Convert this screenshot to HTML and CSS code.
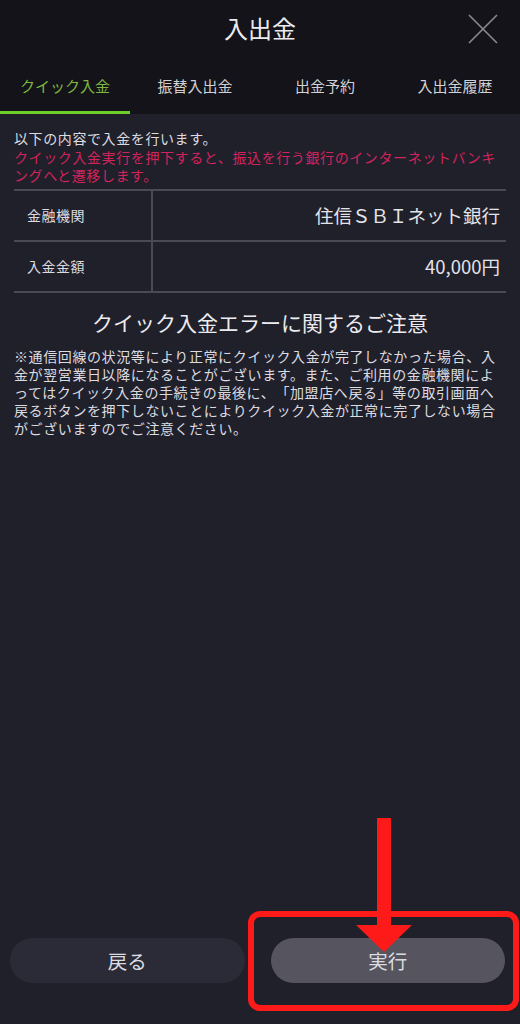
FILE: index.html
```html
<!DOCTYPE html>
<html lang="ja">
<head>
<meta charset="utf-8">
<link rel="stylesheet" href="styles.css">
</head>
<body>
<div class="page">
  <header class="header">
    <div class="titlebar">
      <h1 class="title">入出金</h1>
      <button class="close" aria-label="閉じる">
        <svg width="30" height="30" viewBox="0 0 30 30"><path d="M1 1 L29 29 M29 1 L1 29" stroke="#8a8a90" stroke-width="1.6" fill="none"/></svg>
      </button>
    </div>
    <nav class="tabs">
      <div class="tab active">クイック入金</div>
      <div class="tab">振替入出金</div>
      <div class="tab">出金予約</div>
      <div class="tab">入出金履歴</div>
    </nav>
  </header>
  <main class="content">
    <p class="intro">以下の内容で入金を行います。</p>
    <p class="warn">クイック入金実行を押下すると、振込を行う銀行のインターネットバンキングへと遷移します。</p>
    <table class="info">
      <tr><th>金融機関</th><td>住信ＳＢＩネット銀行</td></tr>
      <tr><th>入金金額</th><td>40,000円</td></tr>
    </table>
    <h2 class="notice-title">クイック入金エラーに関するご注意</h2>
    <p class="notice">※通信回線の状況等により正常にクイック入金が完了しなかった場合、入金が翌営業日以降になることがございます。また、ご利用の金融機関によってはクイック入金の手続きの最後に、「加盟店へ戻る」等の取引画面へ戻るボタンを押下しないことによりクイック入金が正常に完了しない場合がございますのでご注意ください。</p>
  </main>
  <footer class="footer">
    <button class="btn back">戻る</button>
    <button class="btn exec">実行</button>
    <div class="mark-box"></div>
    <div class="mark-arrow">
      <div class="shaft"></div>
      <div class="head"></div>
    </div>
  </footer>
</div>
</body>
</html>
```

FILE: styles.css
```css
* { box-sizing: border-box; }
html, body { margin: 0; padding: 0; }
body {
  background: #20202b;
  font-family: "Noto Sans CJK JP", "Noto Sans", sans-serif;
  color: #e4e4e8;
  text-spacing-trim: space-all;
}
.page {
  width: 520px;
  height: 1024px;
  display: flex;
  flex-direction: column;
  background: #20202b;
  overflow: hidden;
}
.header {
  background: #131319;
}
.titlebar {
  height: 56px;
  display: flex;
  align-items: center;
  justify-content: center;
  position: relative;
}
.title {
  margin: 0;
  font-size: 24px;
  font-weight: 400;
  color: #ececf0;
  line-height: 30px;
}
.close {
  position: absolute;
  right: 22px;
  top: 14px;
  width: 30px;
  height: 30px;
  padding: 0;
  background: none;
  border: 0;
}
.close svg { display: block; }
.tabs {
  display: grid;
  grid-template-columns: repeat(4, 1fr);
  height: 58px;
}
.tab {
  display: flex;
  align-items: center;
  justify-content: center;
  font-size: 15px;
  color: #d2d2d6;
  padding-top: 3px;
  border-bottom: 3px solid transparent;
}
.tab.active {
  color: #7fb83e;
  border-bottom-color: #6ccf2a;
}
.content {
  flex: 1;
  padding: 15px 14px 0;
}
.intro, .warn {
  margin: 0;
  font-size: 14px;
  line-height: 18.5px;
  letter-spacing: 0.6px;
}
.intro { color: #dcdce0; }
.warn { color: #d2235c; }
.info {
  width: 492px;
  margin-top: 4px;
  border-collapse: collapse;
}
.info th, .info td {
  border-top: 2px solid #4a4a54;
  border-bottom: 2px solid #4a4a54;
  height: 51px;
  padding: 0;
}
.info th {
  width: 138px;
  text-align: left;
  font-weight: 400;
  font-size: 14px;
  letter-spacing: 0.5px;
  color: #dcdce0;
  padding-left: 13px;
  border-right: 2px solid #4a4a54;
}
.info td {
  text-align: right;
  font-size: 18.5px;
  color: #e4e4e8;
  padding-right: 6px;
}
.notice-title {
  margin: 15px 0 0;
  text-align: center;
  font-size: 21px;
  line-height: 28px;
  font-weight: 400;
  color: #ececf0;
}
.notice {
  margin: 11px 0 0;
  font-size: 14px;
  line-height: 18px;
  letter-spacing: 0.6px;
  color: #dcdce0;
}
.footer {
  position: relative;
  display: flex;
  gap: 26px;
  padding: 0 15px 41px 10px;
}
.btn {
  flex: 1;
  height: 45px;
  border: 0;
  border-radius: 23px;
  font-family: inherit;
  font-size: 19.5px;
  color: #dcdce0;
}
.back { background: #2b2b37; }
.exec { background: #56555f; }
.mark-box {
  position: absolute;
  left: 248px;
  top: -27px;
  width: 271px;
  height: 100px;
  border: 6px solid #ff1a1a;
  border-radius: 12px;
}
.mark-arrow {
  position: absolute;
  left: 356px;
  top: -120px;
  width: 56px;
  display: flex;
  flex-direction: column;
  align-items: center;
}
.shaft {
  width: 14px;
  height: 107px;
  background: #ff1a1a;
}
.head {
  width: 0;
  height: 0;
  border-left: 28px solid transparent;
  border-right: 28px solid transparent;
  border-top: 27px solid #ff1a1a;
}
```
